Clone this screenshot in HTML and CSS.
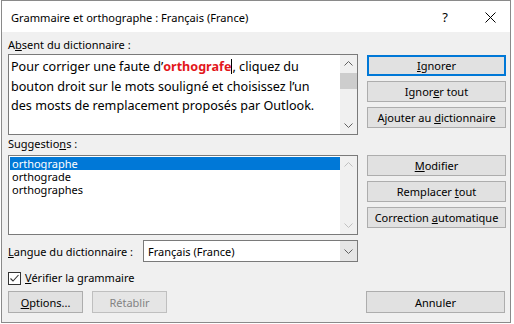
FILE: index.html
```html
<!DOCTYPE html>
<html lang="fr">
<head>
    <meta charset="UTF-8">
    <title>Grammaire et orthographe</title>
    <link rel="stylesheet" href="styles.css">
</head>
<body>
    <div class="dialog">
        <div class="titlebar">
            <span class="title">Grammaire et orthographe : Français (France)</span>
            <span class="help">?</span>
            <svg class="close" width="11" height="11" viewBox="0 0 11 11">
                <path d="M0.5 0.5 L10.5 10.5 M10.5 0.5 L0.5 10.5" stroke="#000" stroke-width="1" fill="none"/>
            </svg>
        </div>

        <div class="content">
            <!-- texte en erreur -->
            <div class="section first">
                <div class="left">
                    <div class="label">A<u>b</u>sent du dictionnaire :</div>
                    <div class="field textbox">
                        <div class="text">Pour corriger une faute d’<b class="err">orthografe</b><span class="caret"></span>, cliquez du<br>bouton droit sur le mots souligné et choisissez l’un<br>des mosts de remplacement proposés par Outlook.</div>
                        <div class="scrollbar">
                            <svg class="arrow" width="9" height="5" viewBox="0 0 9 5"><path d="M0.5 4.5 L4.5 0.5 L8.5 4.5" stroke="#606060" fill="none"/></svg>
                            <div class="track"><div class="thumb"></div></div>
                            <svg class="arrow" width="9" height="5" viewBox="0 0 9 5"><path d="M0.5 0.5 L4.5 4.5 L8.5 0.5" stroke="#606060" fill="none"/></svg>
                        </div>
                    </div>
                </div>
                <div class="buttons">
                    <button class="btn default"><u>I</u>gnorer</button>
                    <button class="btn">Ignor<u>e</u>r tout</button>
                    <button class="btn">Ajouter au <u>d</u>ictionnaire</button>
                </div>
            </div>

            <!-- suggestions -->
            <div class="section second">
                <div class="left">
                    <div class="label">Suggestio<u>n</u>s :</div>
                    <div class="field listbox">
                        <ul class="items">
                            <li class="selected">orthographe</li>
                            <li>orthograde</li>
                            <li>orthographes</li>
                        </ul>
                        <div class="scrollbar disabled">
                            <svg class="arrow" width="9" height="5" viewBox="0 0 9 5"><path d="M0.5 4.5 L4.5 0.5 L8.5 4.5" stroke="#c0c0c0" fill="none"/></svg>
                            <div class="track"></div>
                            <svg class="arrow" width="9" height="5" viewBox="0 0 9 5"><path d="M0.5 0.5 L4.5 4.5 L8.5 0.5" stroke="#c0c0c0" fill="none"/></svg>
                        </div>
                    </div>
                </div>
                <div class="buttons">
                    <button class="btn"><u>M</u>odifier</button>
                    <button class="btn">Remplacer <u>t</u>out</button>
                    <button class="btn">Correction <u>a</u>utomatique</button>
                </div>
            </div>

            <div class="lang-row">
                <span class="lang-label"><u>L</u>angue du dictionnaire :</span>
                <div class="select">
                    <span class="select-value">Français (France)</span>
                    <span class="select-btn">
                        <svg width="9" height="5" viewBox="0 0 9 5"><path d="M0.5 0.5 L4.5 4.5 L8.5 0.5" stroke="#606060" fill="none"/></svg>
                    </span>
                </div>
            </div>

            <label class="check-row">
                <span class="checkbox">
                    <svg width="11" height="11" viewBox="0 0 11 11"><path d="M1.5 5.5 L4 8 L9.5 2" stroke="#333" stroke-width="1.1" fill="none"/></svg>
                </span>
                <span><u>V</u>érifier la grammaire</span>
            </label>

            <div class="bottom-row">
                <button class="btn small"><u>O</u>ptions...</button>
                <button class="btn small disabled">Rétablir</button>
                <button class="btn cancel">Annuler</button>
            </div>
        </div>
    </div>
</body>
</html>
```

FILE: styles.css
```css
body {
    margin: 0;
    background: #ffffff;
    font-family: "Noto Sans", "Open Sans", sans-serif;
    font-size: 11px;
    color: #000;
}
.dialog {
    width: 508px;
    height: 321px;
    margin-left: 1px;
    border: 1px solid #8a8a8a;
    background: #f0f0f0;
    overflow: hidden;
}
.titlebar {
    height: 30px;
    background: #fff;
    display: flex;
    align-items: center;
    padding-left: 9px;
    padding-top: 1px;
}
.title {
    flex: 1;
    font-size: 11.1px;
}
.help {
    font-size: 13px;
    margin-right: 37px;
}
.close {
    margin-right: 14px;
}
.content {
    padding: 5px 4px 0 6px;
}
.section {
    display: grid;
    grid-template-columns: 350px 139px;
    column-gap: 9px;
}
.label {
    height: 16px;
    line-height: 16px;
}
.first .label {
    margin-bottom: 1px;
}
.second {
    margin-top: 1px;
}
.second .label {
    margin-bottom: 3px;
}
.first .buttons {
    padding-top: 18px;
}
.second .buttons {
    padding-top: 19px;
}
.buttons {
    display: flex;
    flex-direction: column;
    gap: 5px;
}
.btn {
    font-family: inherit;
    font-size: 11px;
    height: 21px;
    padding: 0;
    background: #e1e1e1;
    border: 1px solid #adadad;
    color: #000;
}
.btn.default {
    border: 2px solid #0078d7;
}
.field {
    display: flex;
    background: #fff;
    border: 1px solid #7a7a7a;
}
.textbox {
    height: 79px;
}
.text {
    flex: 1;
    font-size: 12.6px;
    line-height: 19.5px;
    padding: 2px 2px 0 2px;
    white-space: nowrap;
}
.err {
    color: #e3171b;
}
.caret {
    display: inline-block;
    width: 1px;
    height: 15px;
    background: #000;
    vertical-align: -3px;
}
.scrollbar {
    width: 17px;
    display: flex;
    flex-direction: column;
    align-items: center;
    background: #f0f0f0;
}
.scrollbar .arrow {
    margin: 6px 0;
}
.track {
    flex: 1;
    width: 100%;
}
.thumb {
    height: 16px;
    margin-top: 1px;
    background: #cdcdcd;
}
.listbox {
    height: 78px;
}
.items {
    flex: 1;
    list-style: none;
    margin: 0;
    padding: 1px 0 0 1px;
}
.items li {
    height: 13px;
    line-height: 13px;
    padding-left: 2px;
}
.items .selected {
    background: #0078d7;
    color: #fff;
}
.lang-row {
    display: flex;
    align-items: center;
    margin-top: 5px;
}
.lang-label {
    width: 135px;
    line-height: 16px;
    padding-top: 2px;
}
.select {
    width: 213px;
    height: 20px;
    display: flex;
    align-items: center;
    background: #fff;
    border: 1px solid #7a7a7a;
}
.select-value {
    flex: 1;
    padding-left: 4px;
}
.select-btn {
    width: 17px;
    height: 100%;
    display: flex;
    align-items: center;
    justify-content: center;
    background: #e6e6e6;
}
.check-row {
    display: flex;
    align-items: center;
    gap: 4px;
    margin-top: 8px;
    line-height: 16px;
}
.checkbox {
    width: 11px;
    height: 11px;
    display: flex;
    border: 1px solid #333;
    background: #fff;
}
.bottom-row {
    display: flex;
    margin-top: 5px;
}
.bottom-row .btn {
    height: 22px;
}
.btn.small {
    width: 75px;
    margin-right: 9px;
}
.btn.disabled {
    color: #838383;
    background: #e5e5e5;
    border-color: #bfbfbf;
}
.btn.cancel {
    width: 139px;
    margin-left: auto;
    margin-right: 1px;
}
```
